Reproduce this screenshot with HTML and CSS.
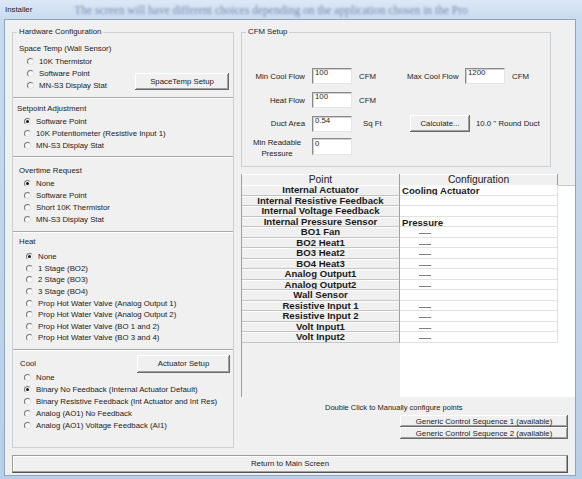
FILE: index.html
```html
<!DOCTYPE html>
<html lang="en">
<head>
    <meta charset="UTF-8">
    <title>Installer</title>
    <link rel="stylesheet" href="styles.css">
</head>
<body>
<div class="window">
    <div class="titlebar">
        <span class="title">Installer</span>
        <span class="ghost">The screen will have different choices depending on the application chosen in the Pro</span>
    </div>
    <div class="client">
        <div class="main">
            <fieldset class="group hw">
                <legend>Hardware Configuration</legend>

                <div class="sec sec-space">
                    <div class="sec-title">Space Temp (Wall Sensor)</div>
                    <div class="sec-body">
                        <ul class="radios">
                            <li><span class="radio"></span>10K Thermistor</li>
                            <li><span class="radio"></span>Software Point</li>
                            <li><span class="radio"></span>MN-S3 Display Stat</li>
                        </ul>
                        <button class="btn btn-space">SpaceTemp Setup</button>
                    </div>
                </div>

                <div class="sec sec-setpoint">
                    <div class="sec-title">Setpoint Adjustment</div>
                    <ul class="radios">
                        <li><span class="radio on"></span>Software Point</li>
                        <li><span class="radio"></span>10K Potentiometer (Resistive Input 1)</li>
                        <li><span class="radio"></span>MN-S3 Display Stat</li>
                    </ul>
                </div>

                <div class="sec sec-overtime">
                    <div class="sec-title">Overtime Request</div>
                    <ul class="radios">
                        <li><span class="radio on"></span>None</li>
                        <li><span class="radio"></span>Software Point</li>
                        <li><span class="radio"></span>Short 10K Thermistor</li>
                        <li><span class="radio"></span>MN-S3 Display Stat</li>
                    </ul>
                </div>

                <div class="sec sec-heat">
                    <div class="sec-title">Heat</div>
                    <ul class="radios">
                        <li><span class="radio on"></span>None</li>
                        <li><span class="radio"></span>1 Stage (BO2)</li>
                        <li><span class="radio"></span>2 Stage (BO3)</li>
                        <li><span class="radio"></span>3 Stage (BO4)</li>
                        <li><span class="radio"></span>Prop Hot Water Valve (Analog Output 1)</li>
                        <li><span class="radio"></span>Prop Hot Water Valve (Analog Output 2)</li>
                        <li><span class="radio"></span>Prop Hot Water Valve (BO 1 and 2)</li>
                        <li><span class="radio"></span>Prop Hot Water Valve (BO 3 and 4)</li>
                    </ul>
                </div>

                <div class="sec sec-cool">
                    <div class="sec-head">
                        <div class="sec-title">Cool</div>
                        <button class="btn btn-act">Actuator Setup</button>
                    </div>
                    <ul class="radios">
                        <li><span class="radio"></span>None</li>
                        <li><span class="radio on"></span>Binary No Feedback (Internal Actuator Default)</li>
                        <li><span class="radio"></span>Binary Resistive Feedback (Int Actuator and Int Res)</li>
                        <li><span class="radio"></span>Analog (AO1) No Feedback</li>
                        <li><span class="radio"></span>Analog (AO1) Voltage Feedback (AI1)</li>
                    </ul>
                </div>
            </fieldset>

            <div class="right">
                <fieldset class="group cfm">
                    <legend>CFM Setup</legend>
                    <div class="frow">
                        <span class="flabel">Min Cool Flow</span>
                        <input class="field" type="text" value="100">
                        <span class="unit">CFM</span>
                        <span class="flabel2">Max Cool Flow</span>
                        <input class="field" type="text" value="1200">
                        <span>CFM</span>
                    </div>
                    <div class="frow">
                        <span class="flabel">Heat Flow</span>
                        <input class="field" type="text" value="100">
                        <span class="unit">CFM</span>
                    </div>
                    <div class="frow frow-duct">
                        <span class="flabel">Duct Area</span>
                        <input class="field" type="text" value="0.54">
                        <span class="unit unit-sq">Sq Ft</span>
                        <button class="btn btn-calc">Calculate...</button>
                        <span>10.0 '' Round Duct</span>
                    </div>
                    <div class="frow frow-min">
                        <span class="flabel flabel-two">Min Readable<br>Pressure</span>
                        <input class="field field-tall" type="text" value="0">
                    </div>
                </fieldset>

                <div class="points">
                    <div class="points-head">
                        <div class="ph">Point</div>
                        <div class="ph">Configuration</div>
                        <div class="ph-rest"></div>
                    </div>
                    <div class="prow"><div class="pt">Internal Actuator</div><div class="cfg">Cooling Actuator</div></div>
                    <div class="prow"><div class="pt">Internal Resistive Feedback</div><div class="cfg"></div></div>
                    <div class="prow"><div class="pt">Internal Voltage Feedback</div><div class="cfg"></div></div>
                    <div class="prow"><div class="pt">Internal Pressure Sensor</div><div class="cfg">Pressure</div></div>
                    <div class="prow"><div class="pt">BO1 Fan</div><div class="cfg"><span class="dash">—</span></div></div>
                    <div class="prow"><div class="pt">BO2 Heat1</div><div class="cfg"><span class="dash">—</span></div></div>
                    <div class="prow"><div class="pt">BO3 Heat2</div><div class="cfg"><span class="dash">—</span></div></div>
                    <div class="prow"><div class="pt">BO4 Heat3</div><div class="cfg"><span class="dash">—</span></div></div>
                    <div class="prow"><div class="pt">Analog Output1</div><div class="cfg"><span class="dash">—</span></div></div>
                    <div class="prow"><div class="pt">Analog Output2</div><div class="cfg"><span class="dash">—</span></div></div>
                    <div class="prow"><div class="pt">Wall Sensor</div><div class="cfg"></div></div>
                    <div class="prow"><div class="pt">Resistive Input 1</div><div class="cfg"><span class="dash">—</span></div></div>
                    <div class="prow"><div class="pt">Resistive Input 2</div><div class="cfg"><span class="dash">—</span></div></div>
                    <div class="prow"><div class="pt">Volt Input1</div><div class="cfg"><span class="dash">—</span></div></div>
                    <div class="prow"><div class="pt">Volt Input2</div><div class="cfg"><span class="dash">—</span></div></div>
                </div>

                <p class="hint">Double Click to Manually configure points</p>
                <div class="seq">
                    <button class="btn btn-seq">Generic Control Sequence 1 (available)</button>
                    <button class="btn btn-seq">Generic Control Sequence 2 (available)</button>
                </div>
            </div>
        </div>

        <button class="btn btn-return">Return to Main Screen</button>
    </div>
</div>
</body>
</html>
```

FILE: styles.css
```css
body {
    margin: 0;
    font-family: "Liberation Sans", Arial, sans-serif;
    font-size: 7.8px;
    color: #1b1b1b;
}
.window {
    width: 582px;
    height: 479px;
    box-sizing: border-box;
    display: flex;
    flex-direction: column;
    background: linear-gradient(#c8dbf0, #b9cfe8);
}
.titlebar {
    height: 19px;
    flex: none;
    display: flex;
    align-items: center;
    padding-left: 5px;
    overflow: hidden;
    white-space: nowrap;
    background: linear-gradient(#dce8f6, #c9dbef);
}
.ghost {
    margin-left: 42px;
    font-family: "Liberation Serif", serif;
    font-size: 11.5px;
    color: #22346a;
    opacity: 0.5;
    filter: blur(0.9px);
}
.client {
    flex: 1;
    margin: 0 6px 3px 4px;
    background: #f0f0f0;
    border: 1px solid #8ea5c1;
    padding: 7px 0 2px 7px;
}
.main {
    display: flex;
    gap: 7px;
}

/* group boxes */
.group {
    margin: 0;
    padding: 0;
    min-width: 0;
    border: 1px solid #cbd0d4;
}
.group legend {
    padding: 0 2px;
    margin-left: 4px;
    line-height: 10px;
}
.hw {
    width: 222px;
    box-sizing: border-box;
}
.sec + .sec {
    border-top: 1px solid #a9a9a9;
    box-shadow: inset 0 1px #fff;
}
.sec-title {
    line-height: 12px;
    white-space: nowrap;
}
.radios {
    list-style: none;
    margin: 0;
    padding: 0 0 0 11px;
}
.radios li {
    height: 12px;
    display: flex;
    align-items: center;
    white-space: nowrap;
}
.radio {
    width: 7px;
    height: 7px;
    box-sizing: border-box;
    margin-right: 5px;
    border-radius: 50%;
    border: 1px solid;
    border-color: #777 #e4e4e4 #e4e4e4 #777;
    background: #f8f8f8;
    display: inline-flex;
    align-items: center;
    justify-content: center;
}
.radio.on::after {
    content: "";
    width: 3px;
    height: 3px;
    border-radius: 50%;
    background: #111;
}

.sec-space {
    padding: 6px 0;
}
.sec-space .sec-title {
    padding-left: 6px;
}
.sec-body {
    display: flex;
    justify-content: space-between;
    align-items: flex-end;
}
.sec-space .radios {
    padding-left: 14px;
}
.sec-setpoint {
    padding: 5px 0;
}
.sec-setpoint .sec-title {
    padding-left: 4px;
}
.sec-overtime {
    padding: 8px 0 6px;
}
.sec-overtime .sec-title {
    padding-left: 6px;
}
.sec-heat {
    padding: 4px 0 5px;
}
.sec-heat .sec-title {
    padding-left: 6px;
    margin-bottom: 3px;
}
.sec-heat .radios {
    padding-left: 13px;
}
.sec-heat .radios li {
    height: 11.6px;
}
.sec-cool {
    padding: 5px 0 15px;
}
.sec-head {
    display: flex;
    justify-content: space-between;
    align-items: center;
}
.sec-cool .sec-title {
    padding-left: 7px;
}
.sec-cool .radios {
    margin-top: -1px;
}

/* buttons */
.btn {
    font: inherit;
    color: #1b1b1b;
    background: #f0f0f0;
    border: 0;
    padding: 0;
    white-space: nowrap;
    box-shadow: inset -1px -1px #696969, inset 1px 1px #fff, inset -2px -2px #a0a0a0;
}
.btn-space {
    width: 94px;
    height: 17px;
    margin: 0 4px 1px 0;
}
.btn-act {
    width: 93px;
    height: 18px;
    margin-right: 3px;
}
.btn-calc {
    width: 60px;
    height: 17px;
    margin: 0 6px 0 3px;
}
.btn-seq {
    width: 168px;
    height: 12px;
}
.btn-return {
    display: block;
    width: 556px;
    height: 18px;
    margin-top: 7px;
    border: 1px solid;
    border-color: #9c9c9c #555 #555 #9c9c9c;
    box-shadow: inset -1px -1px #a0a0a0, inset 1px 1px #fff;
}

/* CFM setup */
.right {
    flex: 1;
    min-width: 0;
}
.cfm {
    width: 310px;
    box-sizing: border-box;
    padding: 31px 0 7px;
}
.frow {
    display: flex;
    align-items: center;
    height: 16px;
    white-space: nowrap;
}
.frow + .frow {
    margin-top: 8px;
}
.frow-duct {
    height: 17px;
    margin-top: 7px !important;
}
.frow-min {
    height: 22px;
    align-items: flex-start;
    margin-top: 5px !important;
}
.flabel {
    width: 63px;
    box-sizing: border-box;
    text-align: right;
    margin-right: 7px;
}
.flabel-two {
    text-align: center;
    padding-left: 7px;
    line-height: 11px;
}
.flabel2 {
    width: 51px;
    text-align: right;
    margin-right: 7px;
}
.field {
    width: 40px;
    height: 16px;
    box-sizing: border-box;
    margin: 0 7px 0 0;
    padding: 0 2px 7px;
    font: inherit;
    color: #1b1b1b;
    background: #fff;
    border: 1px solid;
    border-color: #8a8a8a #e6e6e6 #e6e6e6 #8a8a8a;
    box-shadow: inset 1px 1px #cfcfcf;
    outline: none;
}
.field-tall {
    height: 17px;
    margin-top: 1px;
}
.unit {
    width: 48px;
    box-sizing: border-box;
}
.unit-sq {
    padding-left: 4px;
}

/* points grid */
.points {
    margin-top: 7px;
    height: 223px;
    box-sizing: border-box;
    border-left: 1px solid #a0a0a0;
    background: linear-gradient(to right, #f0f0f0 158px, #fff 158px);
    overflow: hidden;
}
.points-head {
    display: grid;
    grid-template-columns: 158px 158px 1fr;
    height: 11px;
    background: #f0f0f0;
}
.ph {
    box-sizing: border-box;
    text-align: center;
    font-size: 10.3px;
    line-height: 11px;
    color: #222;
    border-right: 1px solid #a0a0a0;
    border-bottom: 1px solid #a0a0a0;
    box-shadow: inset 0 1px #fff;
}
.ph-rest {
    border-bottom: 1px solid #c8c8c8;
}
.prow {
    display: grid;
    grid-template-columns: 158px 158px;
    height: 10.5px;
    font-size: 9.6px;
    font-weight: bold;
    line-height: 10.5px;
    color: #1a1a1a;
}
.pt {
    text-align: center;
    white-space: nowrap;
    overflow: hidden;
    box-sizing: border-box;
    background: #f0f0f0;
    border-right: 1px solid #a0a0a0;
    border-bottom: 1px solid #c4c4c4;
    box-shadow: inset 0 1px #fff;
}
.cfg {
    box-sizing: border-box;
    padding: 1px 0 0 2px;
    line-height: 9.5px;
    white-space: nowrap;
    overflow: hidden;
    background: #fff;
    border-right: 1px solid #e2e2e2;
    border-bottom: 1px solid #e2e2e2;
}
.dash {
    display: inline-block;
    margin-left: 17px;
    font-size: 9px;
    font-weight: normal;
    line-height: 8px;
    color: #333;
    transform: scaleX(1.35);
    transform-origin: left center;
}
.hint {
    margin: 6px 0 0;
    padding-left: 84px;
    font-size: 7.5px;
    line-height: 10px;
}
.seq {
    margin: 2px 7px 0 0;
    display: flex;
    flex-direction: column;
    align-items: flex-end;
}
```
